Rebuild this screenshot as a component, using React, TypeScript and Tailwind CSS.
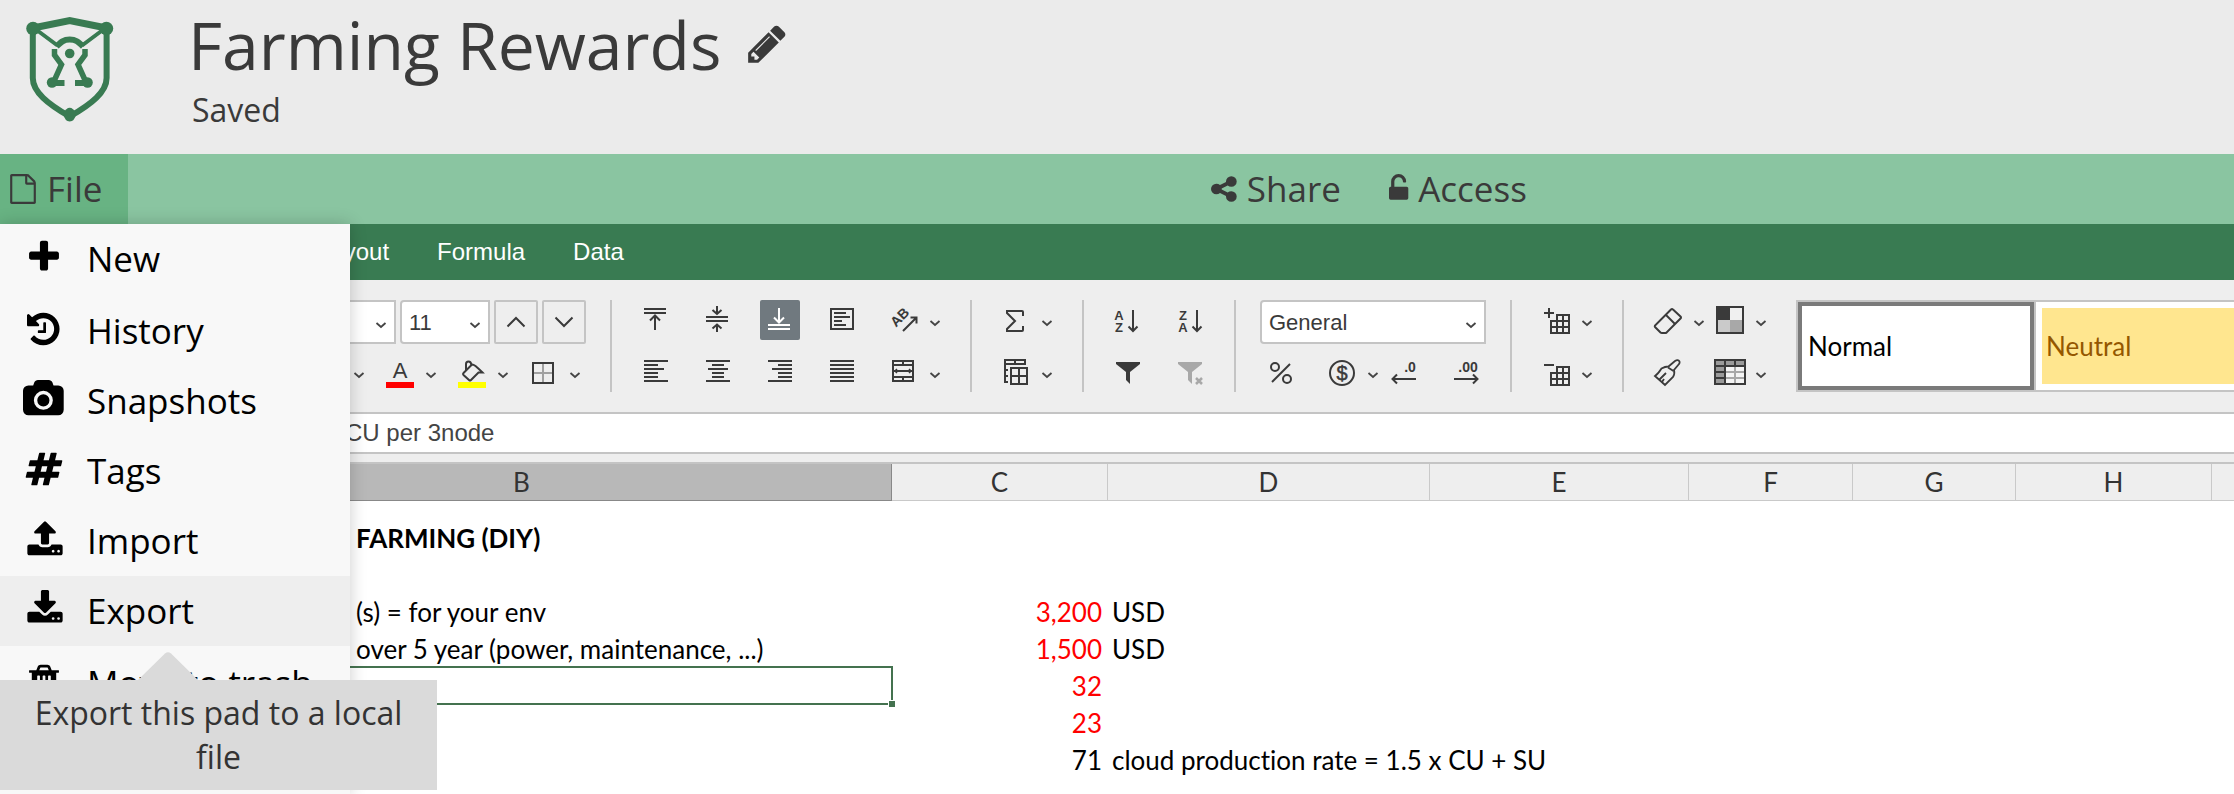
import type { ReactNode } from "react";

/* ---------- solid glyph icons, drawn on a 1792-unit em ---------- */

type GlyphProps = { d: string; size: "sm" | "md" | "lg"; width?: number };

const glyphSizes = { sm: "h-[30px]", md: "h-[38px]", lg: "h-[44px]" };

function Glyph({ d, size, width = 1792 }: GlyphProps) {
  return (
    <svg
      aria-hidden="true"
      viewBox={`0 0 ${width} 1792`}
      className={`${glyphSizes[size]} w-auto shrink-0 overflow-visible fill-current`}
    >
      <path d={d} />
    </svg>
  );
}

const glyphs = {
  plus: "M1600 736v192q0 40-28 68t-68 28h-416v416q0 40-28 68t-68 28h-192q-40 0-68-28t-28-68v-416h-416q-40 0-68-28t-28-68v-192q0-40 28-68t68-28h416v-416q0-40 28-68t68-28h192q40 0 68 28t28 68v416h416q40 0 68 28t28 68z",
  history:
    "M1536 896q0 156-61 298t-164 245-245 164-298 61q-172 0-327-72.5t-264-204.5q-7-10-6.5-22.5t8.5-20.5l137-138q10-9 25-9 16 2 23 12 73 95 179 147t225 52q104 0 198.5-40.5t163.5-109.5 109.5-163.5 40.5-198.5-40.5-198.5-109.5-163.5-163.5-109.5-198.5-40.5q-98 0-188 35.5t-160 101.5l137 138q31 30 14 69-17 40-59 40h-448q-26 0-45-19t-19-45v-448q0-42 40-59 39-17 69 14l130 129q107-101 244.5-156.5t284.5-55.5q156 0 298 61t245 164 164 245 61 298zm-640-288v448q0 14-9 23t-23 9h-320q-14 0-23-9t-9-23v-64q0-14 9-23t23-9h224v-352q0-14 9-23t23-9h64q14 0 23 9t9 23z",
  camera:
    "M960 672q119 0 203.5 84.5t84.5 203.5-84.5 203.5-203.5 84.5-203.5-84.5-84.5-203.5 84.5-203.5 203.5-84.5zm704-416q106 0 181 75t75 181v896q0 106-75 181t-181 75h-1408q-106 0-181-75t-75-181v-896q0-106 75-181t181-75h224l51-136q19-49 69.5-84.5t103.5-35.5h512q53 0 103.5 35.5t69.5 84.5l51 136h224zm-704 1152q185 0 316.5-131.5t131.5-316.5-131.5-316.5-316.5-131.5-316.5 131.5-131.5 316.5 131.5 316.5 316.5 131.5z",
  hashtag:
    "M991 1024l64-256h-254l-64 256h254zm768-504l-56 224q-7 24-31 24h-327l-64 256h311q15 0 25 12 10 14 6 28l-56 224q-5 24-31 24h-327l-81 328q-7 24-31 24h-224q-16 0-26-12-9-12-6-28l78-312h-254l-81 328q-7 24-31 24h-225q-15 0-25-12-9-12-6-28l78-312h-311q-15 0-25-12-9-12-6-28l56-224q7-24 31-24h327l64-256h-311q-15 0-25-12-10-14-6-28l56-224q5-24 31-24h327l81-328q7-24 32-24h224q15 0 25 12 9 12 6 28l-78 312h254l81-328q7-24 32-24h224q15 0 25 12 9 12 6 28l-78 312h311q15 0 25 12 9 12 6 28z",
  upload:
    "M1344 1472q0-26-19-45t-45-19-45 19-19 45 19 45 45 19 45-19 19-45zm256 0q0-26-19-45t-45-19-45 19-19 45 19 45 45 19 45-19 19-45zm128-224v320q0 40-28 68t-68 28h-1472q-40 0-68-28t-28-68v-320q0-40 28-68t68-28h427q21 56 70.5 92t110.5 36h256q61 0 110.5-36t70.5-92h427q40 0 68 28t28 68zm-325-648q-17 40-59 40h-256v448q0 26-19 45t-45 19h-256q-26 0-45-19t-19-45v-448h-256q-42 0-59-40-17-39 14-69l448-448q18-19 45-19t45 19l448 448q31 30 14 69z",
  download:
    "M1344 1344q0-26-19-45t-45-19-45 19-19 45 19 45 45 19 45-19 19-45zm256 0q0-26-19-45t-45-19-45 19-19 45 19 45 45 19 45-19 19-45zm128-224v320q0 40-28 68t-68 28h-1472q-40 0-68-28t-28-68v-320q0-40 28-68t68-28h465l135 136q58 56 136 56t136-56l136-136h464q40 0 68 28t28 68zm-325-569q17 41-14 70l-448 448q-18 19-45 19t-45-19l-448-448q-31-29-14-70 17-39 59-39h256v-448q0-26 19-45t45-19h256q26 0 45 19t19 45v448h256q42 0 59 39z",
  trash:
    "M704 1376v-704q0-14-9-23t-23-9h-64q-14 0-23 9t-9 23v704q0 14 9 23t23 9h64q14 0 23-9t9-23zm256 0v-704q0-14-9-23t-23-9h-64q-14 0-23 9t-9 23v704q0 14 9 23t23 9h64q14 0 23-9t9-23zm256 0v-704q0-14-9-23t-23-9h-64q-14 0-23 9t-9 23v704q0 14 9 23t23 9h64q14 0 23-9t9-23zm-544-992h448l-48-117q-7-9-17-11h-317q-10 2-17 11zm928 32v64q0 14-9 23t-23 9h-96v948q0 83-47 143.5t-113 60.5h-832q-66 0-113-58.5t-47-141.5v-952h-96q-14 0-23-9t-9-23v-64q0-14 9-23t23-9h309l70-167q15-37 54-63t79-26h320q40 0 79 26t54 63l70 167h309q14 0 23 9t9 23z",
  share:
    "M1216 1024q133 0 226.5 93.5t93.5 226.5-93.5 226.5-226.5 93.5-226.5-93.5-93.5-226.5q0-12 2-34l-360-180q-92 86-218 86-133 0-226.5-93.5t-93.5-226.5 93.5-226.5 226.5-93.5q126 0 218 86l360-180q-2-22-2-34 0-133 93.5-226.5t226.5-93.5 226.5 93.5 93.5 226.5-93.5 226.5-226.5 93.5q-126 0-218-86l-360 180q2 22 2 34t-2 34l360 180q92-86 218-86z",
  unlock:
    "M1056 768q40 0 68 28t28 68v576q0 40-28 68t-68 28h-960q-40 0-68-28t-28-68v-576q0-40 28-68t68-28h32v-320q0-185 131.5-316.5t316.5-131.5 316.5 131.5 131.5 316.5q0 26-19 45t-45 19h-64q-26 0-45-19t-19-45q0-106-75-181t-181-75-181 75-75 181v320h736z",
  pencil:
    "M491 1536l91-91-235-235-91 91v107h128v128h107zm523-928q0-22-22-22-10 0-17 7l-542 542q-7 7-7 17 0 22 22 22 10 0 17-7l542-542q7-7 7-17zm-54-192l416 416-832 832h-416v-416zm683 96q0 53-37 90l-166 166-416-416 166-165q36-38 90-38 53 0 91 38l235 234q37 39 37 91z",
  file: "M1596 380q28 28 48 76t20 88v1152q0 40-28 68t-68 28h-1344q-40 0-68-28t-28-68v-1600q0-40 28-68t68-28h896q40 0 88 20t76 48zm-444-244v376h376q-10-29-22-41l-313-313q-12-12-41-22zm384 1528v-1024h-416q-40 0-68-28t-28-68v-416h-768v1536h1280z",
};

function Logo() {
  return (
    <svg viewBox="0 0 140 126" className="h-[126px] w-[140px] shrink-0" fill="none" aria-label="Home" role="img">
      <g stroke="#397b52" strokeWidth="6">
        <path d="M33 28L69.7 20.5L106.4 28" strokeWidth="7" />
        <path d="M32.8 28V78C32.8 92 48 104 69.7 116.5C91.4 104 106.6 92 106.6 78V28" />
        <path d="M34 28L57.5 45.5M105.4 28L82 45.5" strokeWidth="4" />
        <path d="M56.5 46.5C61 42 63.5 39.5 69.7 39.5S78.4 42 83 46.5" />
        <path d="M54.5 49V55L61.5 64.5L54.5 80M85 49V55L78 64.5L85 80" strokeWidth="5.5" />
        <path d="M52 83H64.5M75 83H87.4" />
      </g>
      <g fill="#397b52">
        <ellipse cx="33" cy="28.5" rx="6.8" ry="6.8" />
        <ellipse cx="106.4" cy="28.5" rx="6.8" ry="6.8" />
        <circle cx="52" cy="82.5" r="5.2" />
        <circle cx="87.6" cy="82.5" r="5.2" />
        <circle cx="69.7" cy="53.5" r="4.8" />
        <path d="M63 113.5Q69.7 102 76.4 113.5Q74.5 121.5 69.7 121.5T63 113.5z" />
      </g>
    </svg>
  );
}

/* ---------- ribbon ---------- */

function Caret() {
  return (
    <svg viewBox="0 0 22 40" className="pointer-events-none h-10 w-[22px] shrink-0" fill="none" aria-hidden="true">
      <path d="M6.500 21L11 25L15.500 21" stroke="#444" strokeWidth="1.800" />
    </svg>
  );
}

type ToolProps = { label: string; children: ReactNode; menu?: boolean; active?: boolean };

function Tool({ label, children, menu = false, active = false }: ToolProps) {
  return (
    <button type="button" aria-label={label} className="flex h-10 shrink-0">
      <svg
        viewBox="0 0 40 40"
        fill="none"
        stroke="currentColor"
        strokeWidth="2"
        aria-hidden="true"
        className={active ? "size-10 rounded-xs bg-[#70797f] text-white" : "size-10 text-[#3a3a3a]"}
      >
        {children}
      </svg>
      {menu && <Caret />}
    </button>
  );
}

function Gap() {
  return <span className="w-[22px] shrink-0" />;
}

function Lines({ spans }: { spans: [number, number][] }) {
  return <path shapeRendering="crispEdges" d={spans.map(([a, b], i) => `M${a} ${9 + i * 4}H${b}`).join("")} />;
}

function IconText({ x, y, size, children }: { x: number; y: number; size: number; children: string }) {
  return (
    <text
      x={x}
      y={y}
      fontSize={size}
      textAnchor="middle"
      fill="currentColor"
      stroke="none"
      className="font-['Liberation_Sans',sans-serif] font-bold"
    >
      {children}
    </text>
  );
}

function Picker({ label, value, className }: { label: string; value: string; className: string }) {
  return (
    <div className={`grid h-11 items-center rounded-l-sm border-2 border-[#c4c4c4] bg-white ${className}`}>
      <select
        aria-label={label}
        defaultValue={value}
        className="[grid-area:1/1] h-10 w-full appearance-none bg-transparent pl-[7px] text-[22px] text-[#3a3a3a] outline-none"
      >
        <option>{value}</option>
      </select>
      <span className="[grid-area:1/1] justify-self-end pr-0.5">
        <Caret />
      </span>
    </div>
  );
}

function Group({ top, bottom }: { top: ReactNode; bottom: ReactNode }) {
  return (
    <div className="flex h-[92px] shrink-0 flex-col justify-between border-r-2 border-[#c4c4c4] pr-6">
      <div className="flex h-10">{top}</div>
      <div className="flex h-10">{bottom}</div>
    </div>
  );
}

const gridPath = "M21 15H33V33H15V21H21zM21 21H33M15 27H33M21 21V33M27 15V33";
const funnel = "M8 10H32V12L22 20V32L18 28V20L8 12z";

function Ribbon() {
  return (
    <div className="flex gap-6 overflow-hidden border-b-2 border-[#c4c4c4] bg-[#eee] pt-5 pb-5 pl-[146px] font-['Liberation_Sans',sans-serif]">
      <div className="flex h-[92px] shrink-0 flex-col justify-between border-r-2 border-[#c4c4c4] pr-6">
        <div className="flex h-10 gap-1">
          <Picker label="Font" value="" className="w-[250px]" />
          <Picker label="Font size" value="11" className="w-[90px]" />
          <button
            type="button"
            aria-label="Increase font size"
            className="flex size-11 items-center justify-center rounded-xs border-2 border-[#c4c4c4]"
          >
            <svg viewBox="0 0 20 12" className="h-3 w-5" fill="none" stroke="#3a3a3a" strokeWidth="2">
              <path d="M1.500 10.500L10 2L18.500 10.500" />
            </svg>
          </button>
          <button
            type="button"
            aria-label="Decrease font size"
            className="flex size-11 items-center justify-center rounded-xs border-2 border-[#c4c4c4]"
          >
            <svg viewBox="0 0 20 12" className="h-3 w-5" fill="none" stroke="#3a3a3a" strokeWidth="2">
              <path d="M1.500 1.500L10 10L18.500 1.500" />
            </svg>
          </button>
        </div>
        <div className="flex h-10 justify-end gap-[10px]">
          <Tool label="Text style" menu>
            <path d="M8 30H30" />
          </Tool>
          <Tool label="Font color" menu>
            <text
              x="20"
              y="26"
              fontSize="22"
              textAnchor="middle"
              fill="currentColor"
              stroke="none"
              className="font-['Liberation_Sans',sans-serif]"
            >
              A
            </text>
            <path d="M6 33H34" stroke="#f00" strokeWidth="6" />
          </Tool>
          <Tool label="Fill color" menu>
            <path d="M20 12.500L11.500 21Q10.500 22 11.500 23L17 28Q18 29 19 28L26.500 20.500H30.500Q27 17 23.500 14Q21.500 12.500 20 12.500z" />
            <path d="M14 18.500V12Q14 9.500 16.500 9.500T19.500 13" />
            <path d="M6 33H34" stroke="#ff0" strokeWidth="6" />
          </Tool>
          <Tool label="Borders" menu>
            <path d="M19 11V31M9 21H29" stroke="#a0a0a0" />
            <path d="M9 11H29V31H9z" />
          </Tool>
        </div>
      </div>

      <Group
        top={
          <>
            <Tool label="Align top">
              <path shapeRendering="crispEdges" d="M8 9H30M8 13H30M19 16V30" />
              <path d="M14 20.500L19 15.500L24 20.500" />
            </Tool>
            <Gap />
            <Tool label="Align middle">
              <path shapeRendering="crispEdges" d="M8 17H30M8 21H30M19 6V14M19 24V32" />
              <path d="M14.500 10L19 14L23.500 10M14.500 28.500L19 24.500L23.500 28.500" />
            </Tool>
            <Gap />
            <Tool label="Align bottom" active>
              <path shapeRendering="crispEdges" d="M8 25H30M8 29H30M19 8V22" />
              <path d="M14 17.500L19 22.500L24 17.500" />
            </Tool>
            <Gap />
            <Tool label="Wrap text">
              <path shapeRendering="crispEdges" d="M9 9H31V29H9zM12 13H24M12 17H28M12 21H20M12 25H24" />
            </Tool>
            <Gap />
            <Tool label="Orientation" menu>
              <g transform="rotate(-45 17 17)">
                <IconText x={16} y={21} size={14}>
                  AB
                </IconText>
              </g>
              <path d="M19 31L32.500 17.500M26.500 17.500H32.500V23.500" />
            </Tool>
          </>
        }
        bottom={
          <>
            <Tool label="Align left">
              <Lines spans={[[8, 32], [8, 22], [8, 28], [8, 22], [8, 22], [8, 32]]} />
            </Tool>
            <Gap />
            <Tool label="Align center">
              <Lines spans={[[8, 32], [14, 26], [10, 30], [14, 26], [14, 26], [8, 32]]} />
            </Tool>
            <Gap />
            <Tool label="Align right">
              <Lines spans={[[8, 32], [18, 32], [12, 32], [18, 32], [18, 32], [8, 32]]} />
            </Tool>
            <Gap />
            <Tool label="Justify">
              <Lines spans={[[8, 32], [8, 32], [8, 32], [8, 32], [8, 32], [8, 32]]} />
            </Tool>
            <Gap />
            <Tool label="Merge cells" menu>
              <path shapeRendering="crispEdges" d="M9 9H29V29H9zM9 13H29M9 25H29M19 9V13M19 25V29M10 19H28" />
              <path d="M13 17L11 19L13 21M25 17L27 19L25 21" strokeWidth="1.500" />
            </Tool>
          </>
        }
      />

      <Group
        top={
          <Tool label="Summation" menu>
            <path d="M27 16V12Q27 11 26 11H11V13L19 21L11 29V31H26Q27 31 27 30V26" />
          </Tool>
        }
        bottom={
          <Tool label="Pivot table" menu>
            <path
              shapeRendering="crispEdges"
              d="M12 12H29V8H9V30H12M9 12H12M19 8V12M9 18H12M9 24H12M15 16H31V32H15zM23 16V32M15 24H31"
            />
          </Tool>
        }
      />

      <Group
        top={
          <>
            <Tool label="Sort ascending">
              <IconText x={11} y={20} size={13}>
                A
              </IconText>
              <IconText x={11} y={32} size={13}>
                Z
              </IconText>
              <path d="M25 10V31M20.500 26.500L25 31L29.500 26.500" />
            </Tool>
            <Gap />
            <Tool label="Sort descending">
              <IconText x={13} y={20} size={13}>
                Z
              </IconText>
              <IconText x={13} y={32} size={13}>
                A
              </IconText>
              <path d="M27 10V31M22.500 26.500L27 31L31.500 26.500" />
            </Tool>
          </>
        }
        bottom={
          <>
            <Tool label="Filter">
              <path d={funnel} fill="currentColor" stroke="none" />
            </Tool>
            <Gap />
            <Tool label="Clear filter">
              <path d={funnel} fill="#a8a8a8" stroke="none" />
              <path d="M26 26L32 32M32 26L26 32" stroke="#a8a8a8" strokeWidth="2.500" />
            </Tool>
          </>
        }
      />

      <Group
        top={<Picker label="Number format" value="General" className="w-[226px]" />}
        bottom={
          <>
            <Tool label="Percent style">
              <circle cx="15" cy="15" r="4" />
              <circle cx="27" cy="27" r="4" />
              <path d="M30 12L12 30" />
            </Tool>
            <Gap />
            <Tool label="Accounting style" menu>
              <circle cx="20" cy="21" r="12" />
              <text
                x="20"
                y="28"
                fontSize="20"
                textAnchor="middle"
                fill="currentColor"
                strokeWidth="0.500"
                className="font-['Liberation_Sans',sans-serif]"
              >
                $
              </text>
            </Tool>
            <Tool label="Decrease decimal">
              <IconText x={26} y={20} size={14}>
                .0
              </IconText>
              <path d="M9 27H32M13 22.500L8.500 27L13 31.500" />
            </Tool>
            <Gap />
            <Tool label="Increase decimal">
              <IconText x={22} y={20} size={14}>
                .00
              </IconText>
              <path d="M8 27H31M27 22.500L31.500 27L27 31.500" />
            </Tool>
          </>
        }
      />

      <Group
        top={
          <Tool label="Insert cells" menu>
            <path shapeRendering="crispEdges" d={`M8 13H18M13 8V18${gridPath}`} />
          </Tool>
        }
        bottom={
          <Tool label="Delete cells" menu>
            <path shapeRendering="crispEdges" d={`M8 13H18${gridPath}`} />
          </Tool>
        }
      />

      <div className="flex h-[92px] shrink-0 flex-col justify-between">
        <div className="flex h-10">
          <Tool label="Clear" menu>
            <path d="M23 9.500Q24 8.500 25 9.500L32.500 16.500Q33.500 17.500 32.500 18.500L19 32Q18.500 33 17.500 33H14Q13 33 12.500 32.500L7 27Q6.500 26.500 7 25.500z" />
            <path d="M18 15L27 24" />
          </Tool>
          <Tool label="Color scheme" menu>
            <g stroke="none" shapeRendering="crispEdges">
              <path d="M6 6H34V34H6z" fill="#3a3a3a" />
              <path d="M20 8H32V20H20z" fill="#f0f0f0" />
              <path d="M8 20H20V32H8z" fill="#cacaca" />
              <path d="M20 20H32V32H20z" fill="#a8a8a8" />
            </g>
          </Tool>
        </div>
        <div className="flex h-10">
          <Tool label="Copy style">
            <path
              d="M20.500 14.500L27 9Q30 7 31.500 9.500Q32 11 31 12L26 18Q27 22 25 25L17 33L7 24Q10 22 13.500 16.500Q17 14.500 20.500 14.500z"
              strokeWidth="1.800"
            />
            <path d="M11 28L18 21M14 30L16 27M20 15.500L25.500 19" strokeWidth="1.800" />
          </Tool>
          <Gap />
          <Tool label="Format as table" menu>
            <g stroke="none" shapeRendering="crispEdges">
              <path d="M4 7H36V33H4z" fill="#3a3a3a" />
              <path d="M6 9H14V13H6zM16 9H24V13H16zM26 9H34V13H26zM6 15H14V19H6zM6 21H14V25H6zM6 27H14V31H6z" fill="#9a9a9a" />
              <path d="M16 15H34V31H16z" fill="#a8a8a8" />
              <path
                d="M16 15H24V19H16zM26 15H34V19H26zM16 21H24V25H16zM26 21H34V25H26zM16 27H24V31H16zM26 27H34V31H26z"
                fill="#f4f4f4"
              />
            </g>
          </Tool>
        </div>
      </div>

      <div className="flex h-[92px] min-w-0 flex-1 overflow-hidden border-2 border-r-0 border-[#c4c4c4] bg-white font-['Lato',sans-serif] text-[26px]">
        <button type="button" className="flex w-[236px] shrink-0 items-center border-4 border-[#7a7a7a] pl-[6px] text-black">
          Normal
        </button>
        <div className="flex min-w-0 flex-1 border-l-2 border-[#c4c4c4] py-[6px] pl-[6px]">
          <button type="button" className="flex flex-1 items-center bg-[#ffe68f] pl-1 text-[#945700]">
            Neutral
          </button>
        </div>
      </div>
    </div>
  );
}

/* ---------- sheet ---------- */

type Row = { b?: string; c?: string; d?: string; bold?: boolean; red?: boolean; tall?: boolean; selected?: boolean };

const rows: Row[] = [
  { b: "FARMING (DIY)", bold: true, tall: true },
  {},
  { b: "(s) = for your env", c: "3,200", d: "USD", red: true },
  { b: "over 5 year (power, maintenance, ...)", c: "1,500", d: "USD", red: true },
  { selected: true, c: "32", red: true },
  { c: "23", red: true },
  { c: "71", d: "cloud production rate = 1.5 x CU + SU" },
];

const columns = ["C", "D", "E", "F", "G", "H"];

function Sheet() {
  return (
    <table className="w-full table-fixed border-separate border-spacing-0 font-['Lato',sans-serif] text-[26px] leading-9 text-black [font-variant-ligatures:none]">
      <colgroup>
        <col className="w-[152px]" />
        <col className="w-[740px]" />
        <col className="w-[216px]" />
        <col className="w-[322px]" />
        <col className="w-[259px]" />
        <col className="w-[164px]" />
        <col className="w-[163px]" />
        <col className="w-[196px]" />
        <col />
      </colgroup>
      <thead>
        <tr className="h-[37px] bg-[#eee] text-[#333]">
          <td className="border-r border-b border-[#c9c9c9]" />
          <th className="border-r border-b border-[#888] bg-[#b8b8b8] p-0 font-normal">B</th>
          {columns.map((name) => (
            <th key={name} className="border-r border-b border-[#c9c9c9] p-0 font-normal">
              {name}
            </th>
          ))}
          <td className="border-b border-[#c9c9c9]" />
        </tr>
      </thead>
      <tbody>
        {rows.map((row, i) => (
          <tr key={i} className={row.tall ? "h-[55px] align-bottom" : "h-[37px] align-bottom"}>
            <td className="p-0" />
            <td className={`relative p-0 pl-[204px] whitespace-nowrap ${row.bold ? "font-bold" : ""}`}>
              {row.b}
              {row.selected && (
                <span className="absolute -inset-y-px -right-px left-0 border-2 border-[#44724f]">
                  <span className="absolute -right-1 -bottom-1 size-[7px] border-t border-l border-white bg-[#44724f]" />
                </span>
              )}
            </td>
            <td className={`p-0 pr-[6px] text-right ${row.red ? "text-[#f00]" : ""}`}>{row.c}</td>
            <td className="p-0 pl-1 whitespace-nowrap">{row.d}</td>
            <td colSpan={5} className="p-0" />
          </tr>
        ))}
      </tbody>
    </table>
  );
}

/* ---------- file menu ---------- */

type MenuItem = { label: string; icon: string; width?: number; hint?: string; strong?: boolean; spaced?: boolean };

const menuItems: MenuItem[] = [
  { label: "New", icon: glyphs.plus, spaced: true },
  { label: "History", icon: glyphs.history, width: 1536, strong: true },
  { label: "Snapshots", icon: glyphs.camera, width: 1920 },
  { label: "Tags", icon: glyphs.hashtag },
  { label: "Import", icon: glyphs.upload, width: 1664 },
  { label: "Export", icon: glyphs.download, width: 1664, hint: "Export this pad to a local file", spaced: true },
  { label: "Move to trash", icon: glyphs.trash },
];

function FileMenu() {
  return (
    <ul className="absolute inset-y-0 left-0 z-10 w-[350px] bg-[#f8f8f8] text-[35px] text-black shadow-[0_0_16px_rgba(0,0,0,0.2)]">
      {menuItems.map((item) => (
        <li key={item.label} className={`relative ${item.spaced ? "mb-0.5" : ""}`}>
          <button
            type="button"
            aria-describedby={item.hint ? "menu-hint" : undefined}
            className={`flex h-[70px] w-full items-center text-left ${item.hint ? "bg-[#eee]" : ""} ${item.strong ? "font-medium" : ""}`}
          >
            <span className="flex w-[87px] shrink-0 justify-center pb-1">
              <Glyph d={item.icon} width={item.width} size="md" />
            </span>
            {item.label}
          </button>
          {item.hint && (
            <div
              id="menu-hint"
              role="tooltip"
              className="absolute top-[104px] left-0 z-20 w-[437px] bg-[#dadada] px-5 py-[11px] text-center text-[32px] leading-[44px] text-[#333]"
            >
              <svg
                viewBox="0 0 60 28"
                className="absolute bottom-full left-[138px] h-7 w-[60px] fill-[#dadada]"
                aria-hidden="true"
              >
                <path d="M0 28L27 1.500Q30 -1 33 1.500L60 28z" />
              </svg>
              {item.hint}
            </div>
          )}
        </li>
      ))}
    </ul>
  );
}

export default function App() {
  return (
    <div className="flex min-h-screen flex-col overflow-hidden bg-white font-['Open_Sans',sans-serif] text-[#3a3a3a]">
      <header className="flex h-[154px] shrink-0 bg-[#ebebeb]">
        <Logo />
        <div className="pl-12">
          <div className="flex h-[88px] items-center gap-6">
            <h1 className="text-[66px] leading-[88px]">Farming Rewards</h1>
            <button type="button" aria-label="Rename">
              <Glyph d={glyphs.pencil} size="lg" />
            </button>
          </div>
          <p className="pl-1 text-[32px] leading-[44px]">Saved</p>
        </div>
      </header>

      <div className="grid h-[70px] shrink-0 grid-cols-[1fr_auto_1fr] bg-[#8ac5a1] text-[35px]">
        <button type="button" aria-expanded="true" className="flex w-32 items-center gap-[9px] bg-[#68b383] pl-2">
          <Glyph d={glyphs.file} size="sm" />
          File
        </button>
        <div className="flex items-center gap-12 pl-[504px]">
          <button type="button" className="flex items-center gap-[10px]">
            <Glyph d={glyphs.share} width={1536} size="sm" />
            Share
          </button>
          <button type="button" className="flex items-center gap-[10px]">
            <Glyph d={glyphs.unlock} width={1152} size="sm" />
            Access
          </button>
        </div>
      </div>

      <main className="relative flex-1">
        <FileMenu />
        <nav className="flex h-14 items-center gap-12 bg-[#397b52] pl-[317px] font-['Liberation_Sans',sans-serif] text-[24px] text-white">
          <button type="button">Layout</button>
          <button type="button">Formula</button>
          <button type="button">Data</button>
        </nav>
        <Ribbon />
        <div className="border-b-2 border-[#c4c4c4] bg-white">
          <input
            aria-label="Formula bar"
            defaultValue="CU per 3node"
            className="block h-[38px] w-full pl-[345px] font-['Liberation_Sans',sans-serif] text-[24px] text-[#444] outline-none"
          />
        </div>
        <div className="h-[10px] border-b-2 border-[#c4c4c4] bg-[#eee]" />
        <Sheet />
      </main>
    </div>
  );
}
